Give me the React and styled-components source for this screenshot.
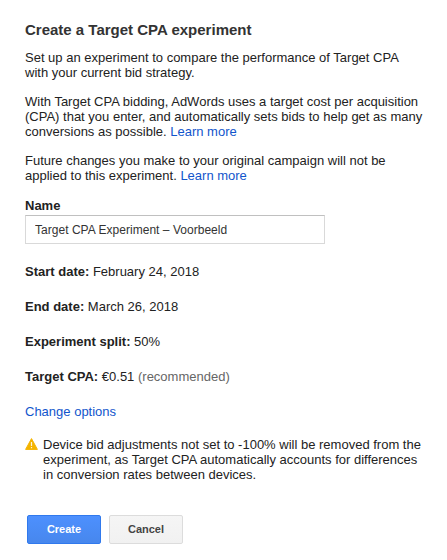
import React from "react";
import styled, { createGlobalStyle } from "styled-components";

const GlobalStyle = createGlobalStyle`
  body {
    margin: 0;
    background: #fff;
  }
`

export default function App () {
  return (
    <>
      <GlobalStyle/>
      <Dialog>
        <Title>Create a Target CPA experiment</Title>
        <Text>
          Set up an experiment to compare the performance of Target CPA<br/>
          with your current bid strategy.
        </Text>
        <Text>
          With Target CPA bidding, AdWords uses a target cost per acquisition<br/>
          (CPA) that you enter, and automatically sets bids to help get as many<br/>
          conversions as possible. <Link href="#">Learn more</Link>
        </Text>
        <Text>
          Future changes you make to your original campaign will not be<br/>
          applied to this experiment. <Link href="#">Learn more</Link>
        </Text>
        <Label htmlFor="name">Name</Label>
        <Input id="name" defaultValue="Target CPA Experiment – Voorbeeld"/>
        <Details>
          <Row><b>Start date:</b> February 24, 2018</Row>
          <Row><b>End date:</b> March 26, 2018</Row>
          <Row><b>Experiment split:</b> 50%</Row>
          <Row><b>Target CPA:</b> €0.51 <Hint>(recommended)</Hint></Row>
          <Row><Link href="#">Change options</Link></Row>
        </Details>
        <Warning>
          <WarningIcon/>
          <div>
            Device bid adjustments not set to -100% will be removed from the<br/>
            experiment, as Target CPA automatically accounts for differences<br/>
            in conversion rates between devices.
          </div>
        </Warning>
        <Buttons>
          <Button $primary>Create</Button>
          <Button>Cancel</Button>
        </Buttons>
      </Dialog>
    </>
  );
}

const WarningIcon = () => (
  <Icon viewBox="0 0 14 13">
    <path d="M6.5 1.6 L12.4 12.4 H0.6 Z" fill="#f4b400" stroke="#f4b400" strokeLinejoin="round"/>
    <path d="M6.5 5 V9 M6.5 10 V11.3" stroke="#fff" strokeOpacity="0.85" strokeWidth="1.2"/>
  </Icon>
)

const Dialog = styled.div`
  box-sizing: border-box;
  width: 447px;
  height: 560px;
  padding: 22px 0 0 25px;
  color: #222;
  font: 13px/15px "Liberation Sans", Arial, sans-serif;
  white-space: nowrap;
`
const Title = styled.h1`
  margin: 0 0 12px;
  color: #333;
  font-size: 15px;
  line-height: 16px;
`
const Text = styled.p`
  margin: 0 0 14px;
`
const Link = styled.a`
  color: #15c;
  text-decoration: none;
`
const Label = styled.label`
  display: block;
  margin: 15px 0 2px;
  font-weight: bold;
`
const Input = styled.input`
  display: block;
  box-sizing: border-box;
  width: 300px;
  height: 29px;
  padding: 0 9px;
  border: 1px solid #d9d9d9;
  border-top-color: #c0c0c0;
  color: #333;
  font: 12px "Liberation Sans", Arial, sans-serif;
  letter-spacing: 0.03px;
`
const Details = styled.div`
  display: flex;
  flex-direction: column;
  gap: 20px;
  margin-top: 20px;
`
const Row = styled.div`
  height: 15px;
`
const Hint = styled.span`
  color: #666;
`
const Warning = styled.div`
  display: flex;
  gap: 4px;
  margin-top: 18px;
`
const Icon = styled.svg`
  flex: none;
  width: 14px;
  height: 13px;
`
const Buttons = styled.div`
  display: flex;
  gap: 8px;
  margin: 33px 0 0 2px;
`
const Button = styled.button`
  box-sizing: border-box;
  width: 74px;
  height: 29px;
  padding: 0 0 2px;
  border: 1px solid ${p => p.$primary ? "#3079ed" : "#dcdcdc"};
  border-radius: 2px;
  background: ${p => p.$primary
    ? "linear-gradient(#4d90fe, #4787ed)"
    : "linear-gradient(#f5f5f5, #f1f1f1)"};
  color: ${p => p.$primary ? "#fff" : "#444"};
  font: bold 11px "Liberation Sans", Arial, sans-serif;
`
